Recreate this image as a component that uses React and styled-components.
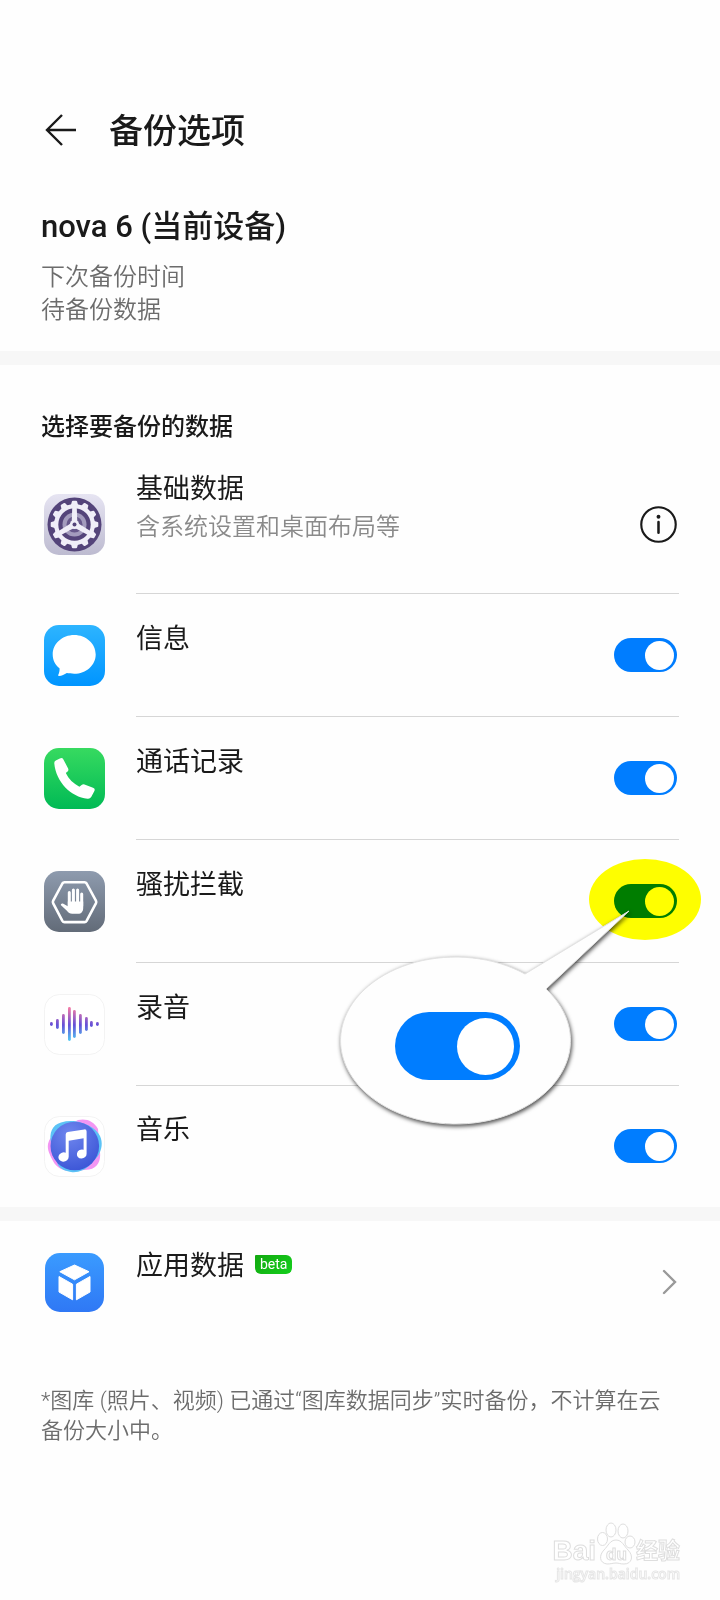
import React, { useState } from 'react';
import styled, { createGlobalStyle } from 'styled-components';

const GlobalStyle = createGlobalStyle`
    * {
        box-sizing: border-box;
    }

    body {
        margin: 0;
        background: #fefefe;
        color: #1a1a1a;
        font-family: Roboto, "Noto Sans CJK SC", sans-serif;
    }
`

const Page = styled.div`
    position: relative;
    display: flex;
    flex-direction: column;
    min-height: 100vh;
    overflow: hidden;
`

const Header = styled.header`
    display: flex;
    align-items: center;
    gap: 29px;
    padding: 108px 40px 0;
`

const IconButton = styled.button`
    display: flex;
    padding: 0;
    border: 0;
    background: none;
    color: inherit;
    cursor: pointer;
`

const PageTitle = styled.h1`
    margin: 0;
    font-size: 34px;
    font-weight: 500;
    line-height: 46px;
`

const Device = styled.section`
    padding: 53px 41px 24px;
    border-bottom: 14px solid #f7f7f7;
`

const DeviceName = styled.h2`
    margin: 0 0 14px;
    font-size: 31px;
    font-weight: 500;
    line-height: 40px;
`

const DeviceInfo = styled.p`
    margin: 0;
    color: #6c6c6c;
    font-size: 24px;
    font-weight: 350;
    line-height: 33px;
`

const DataSection = styled.section`
    padding-top: 46px;
    border-bottom: 14px solid #f7f7f7;
`

const SectionTitle = styled.h3`
    margin: 0 41px 12px;
    font-size: 24px;
    font-weight: 500;
    line-height: 32px;
`

const List = styled.ul`
    margin: 0;
    padding: 0;
    list-style: none;
`

const Row = styled.li`
    position: relative;
    display: flex;
    align-items: center;
    gap: 31px;
    height: ${props => props.$tall ? 139 : 123}px;
    padding: 0 41px 0 44px;

    &:last-child {
        height: 121px;
    }

    > svg {
        flex: none;
    }
`

const RowBody = styled.div`
    display: flex;
    flex: 1;
    align-items: center;
    justify-content: space-between;
    height: 100%;
    padding-right: 2px;
    border-bottom: 1px solid ${props => props.$last ? 'transparent' : '#d6d6d6'};
`

const RowText = styled.div`
    min-height: 68px;
    align-self: ${props => props.$top ? 'flex-start' : 'center'};
    padding-top: ${props => props.$top ? 16 : 0}px;
`

const RowName = styled.label`
    display: flex;
    align-items: center;
    gap: 11px;
    font-size: 27px;
    line-height: 36px;
`

const Summary = styled.p`
    margin: 4px 0 0;
    color: #8a8a8a;
    font-size: 24px;
    font-weight: 350;
    line-height: 32px;
`

const Badge = styled.span`
    height: 19px;
    margin-bottom: 4px;
    padding: 0 5px;
    border-radius: 1px 6px 6px 6px;
    background: linear-gradient(135deg, #12a810, #14cf1c);
    color: #fff;
    font-size: 14px;
    line-height: 19px;
`

const Toggle = styled.input.attrs({ type: 'checkbox' })`
    appearance: none;
    flex: none;
    display: flex;
    align-items: center;
    width: ${props => props.$large ? 125 : 63}px;
    height: ${props => props.$large ? 68 : 34}px;
    margin: 0;
    padding: 0 ${props => props.$large ? 6 : 3}px;
    border-radius: 34px;
    background: #c8c8c8;
    cursor: pointer;

    &::before {
        content: '';
        width: ${props => props.$large ? 57 : 29}px;
        height: ${props => props.$large ? 57 : 29}px;
        border-radius: 50%;
        background: #fff;
    }

    &:checked {
        justify-content: flex-end;
        background: #007dff;
    }
`

const Highlight = styled.div`
    position: absolute;
    z-index: 1;
    top: 19px;
    right: 19px;
    width: 112px;
    height: 81px;
    border-radius: 50%;
    background: #ff0;
    mix-blend-mode: multiply;
    pointer-events: none;
`

const Callout = styled.div`
    position: absolute;
    z-index: 2;
    top: 61px;
    right: 80px;
    width: 310px;
    height: 230px;
    pointer-events: none;
`

const CalloutShape = styled.svg`
    position: absolute;
    inset: 0;
    filter: drop-shadow(1px 2px 2px rgba(0, 0, 0, 0.7));
`

const CalloutBody = styled.div`
    position: absolute;
    bottom: 5px;
    left: 12px;
    display: flex;
    align-items: center;
    justify-content: center;
    width: 231px;
    height: 160px;
`

const Note = styled.p`
    margin: 42px 41px 0;
    color: #6c6c6c;
    font-size: 22px;
    font-weight: 350;
    line-height: 30px;
`

const Watermark = styled.div`
    position: absolute;
    right: 40px;
    bottom: 17px;
    color: #fff;
    font-family: "Liberation Sans", "Noto Sans CJK SC", sans-serif;
`

const WatermarkLogo = styled.div`
    display: flex;
    align-items: flex-end;
    height: 50px;
    font-size: 28px;
    font-weight: 700;
    line-height: 28px;
    -webkit-text-stroke: 1px #dedede;

    span + svg + span {
        font-size: 22px;
    }
`

const WatermarkUrl = styled.div`
    font-family: "Open Sans", sans-serif;
    font-size: 14px;
    font-weight: 600;
    line-height: 18px;
    text-align: right;
    -webkit-text-stroke: 1px #e6e6e6;
`

const Tile = ({ id, from, to, size = 61, stroke, children }) => (
    <svg width="61" height="61" viewBox="0 0 61 61" aria-hidden="true">
        <defs>
            <linearGradient id={id} x1="0" y1="0" x2="0" y2="1">
                <stop offset="0" stopColor={from} />
                <stop offset="1" stopColor={to} />
            </linearGradient>
        </defs>
        <rect
            x={(61 - size) / 2}
            y={(61 - size) / 2}
            width={size}
            height={size}
            rx="15"
            fill={`url(#${id})`}
            stroke={stroke}
        />
        {children}
    </svg>
)

const TEETH = Array.from({ length: 12 }, (_, i) => i * 30)

const SettingsIcon = () => (
    <Tile id="tile-settings" from="#e6e4f2" to="#bdbbd0">
        <circle cx="30.5" cy="30.5" r="27" fill="#54447a" />
        <g fill="#f0eef8">
            <circle cx="30.5" cy="30.5" r="20.5" />
            {TEETH.map(angle => (
                <path
                    key={angle}
                    d="M26.800 11.500L27.900 7.500Q28.100 6.700 28.900 6.700H32.100Q32.900 6.700 33.100 7.500L34.200 11.500Z"
                    transform={`rotate(${angle} 30.5 30.5)`}
                />
            ))}
        </g>
        <circle cx="30.500" cy="30.500" r="16.200" fill="#54447a" />
        <circle cx="30.5" cy="30.5" r="12" fill="#a39bbd" />
        <circle cx="30.5" cy="30.5" r="8" fill="#67588b" />
        <g fill="#f0eef8">
            {[0, 120, 240].map(angle => (
                <path
                    key={angle}
                    d="M28.300 12H32.700L33.400 30.500H27.600Z"
                    transform={`rotate(${angle} 30.5 30.5)`}
                />
            ))}
            <circle cx="30.5" cy="30.5" r="4.6" />
        </g>
        <circle cx="30.5" cy="30.5" r="2" fill="#54447a" />
    </Tile>
)

const MessageIcon = () => (
    <Tile id="tile-message" from="#2db4ff" to="#0095ff">
        <path
            fill="#fff"
            d="M30.2 10C42.1 10 51.7 18.6 51.7 29.4S42.1 48.7 30.2 48.7C27.5 48.7 25 48.2 22.8 48C20.500 49.600 17.700 50.700 15 51C14.200 51.100 14 50.500 14.300 49.800C15.300 47.600 15.800 45.600 15.500 43.300C11.200 39.800 8.700 35.100 8.700 29.4C8.7 18.6 18.3 10 30.2 10Z"
        />
    </Tile>
)

const PhoneIcon = () => (
    <Tile id="tile-phone" from="#37da60" to="#00ba55">
        <path
            fill="#fff"
            d="M10.3 15.5Q10 13.5 11.8 12.5L15.9 10.4Q18.2 9.3 19.4 11.4L24 20.3Q25 22.2 23.6 23.4L21.8 25.1C24.6 31 29.4 35.7 35.4 38.8L37.6 37Q39 36 40.5 36.5L49 39.7Q51.5 40.7 50.4 43L47.2 49Q46 51 43.5 50.7C27 49 12 34 10.3 15.5Z"
        />
    </Tile>
)

const BlockIcon = () => (
    <Tile id="tile-block" from="#8e9bae" to="#626b78">
        <path
            fill="none"
            stroke="#fff"
            strokeWidth="2.6"
            strokeLinejoin="round"
            d="M20.5 11.3H40.5Q41.9 11.3 42.6 12.5L51.9 29.6Q52.6 31 51.9 32.4L42.6 49.9Q41.9 51.1 40.5 51.1H20.5Q19.1 51.1 18.4 49.9L9.2 32.4Q8.5 31 9.2 29.6L18.4 12.5Q19.1 11.3 20.5 11.3Z"
        />
        <g stroke="#fff" strokeWidth="3" strokeLinecap="round">
            <path d="M25.3 21.5V35M29.4 19V35M33.6 19V35M37.7 23V35" />
        </g>
        <path
            fill="#fff"
            d="M23.8 30.5H39.2V37C39.2 40.5 37.3 42.8 34 42.8H28.2C25.8 42.8 24.3 41.6 22.9 39.8L17 34.3C16.4 33.2 17.6 32.1 18.9 32.5L23.8 35.2Z"
        />
    </Tile>
)

const WAVE = [
    [7, 2], [13, 5], [19, 10], [25, 17], [30, 14], [36, 10], [42, 7], [47, 3], [53, 2],
]

const RecorderIcon = () => (
    <Tile id="tile-recorder" from="#fff" to="#fff" size={60} stroke="#f3f3f3">
        <defs>
            <linearGradient id="wave" gradientUnits="userSpaceOnUse" x1="0" y1="14" x2="0" y2="48">
                <stop offset="0" stopColor="#f27aa6" />
                <stop offset="0.5" stopColor="#6450d8" />
                <stop offset="1" stopColor="#4fd3f5" />
            </linearGradient>
        </defs>
        {WAVE.map(([x, half]) => (
            <rect
                key={x}
                x={x - 1}
                y={30 - half}
                width="2.8"
                height={half * 2}
                rx="1.4"
                fill="url(#wave)"
            />
        ))}
    </Tile>
)

const MusicIcon = () => (
    <Tile id="tile-music" from="#fff" to="#fff" size={60} stroke="#f3f3f3">
        <defs>
            <radialGradient id="disc" cx="0.4" cy="0.25" r="0.8">
                <stop offset="0" stopColor="#6f86ee" />
                <stop offset="1" stopColor="#3b55d6" />
            </radialGradient>
        </defs>
        <path
            fill="#f396f3"
            d="M34 4C42 2 50 5 54 13L56 36C57 44 54 52 45 53.500L30 55C22 56 13 53 9 45C6 39 3 34 4 28C5 23 8 20 11 17Z"
        />
        <path
            fill="#5cc3f6"
            d="M7 27C5 17 8 9 17 6.500C24 4.500 31 4.500 38 7C46 9 53 14 56 20C59 27 58 33 54 40L46 49C41 54 34 57 27 56C21 55 17 53 14 49Z"
        />
        <circle cx="30.800" cy="30" r="24.300" fill="url(#disc)" />
        <path
            fill="#fff"
            d="M21.700 18.500Q21.700 16.400 23.800 16L40.200 13.400Q42.600 13.100 42.600 15.500V37.500A4.900 4.500 -15 1 1 39.600 33.800V22.200L24.700 24.800V40.500A5.200 4.600 -15 1 1 21.700 36.700Z"
        />
    </Tile>
)

const AppDataIcon = () => (
    <Tile id="tile-appdata" from="#3a9bff" to="#2f78f5" size={59}>
        <path
            fill="#fff"
            stroke="#fff"
            strokeWidth="1"
            strokeLinejoin="round"
            d="M30.500 13L45 19.700L30.500 27.800L15.800 19.700ZM15 24.500L28.600 32.200V47.800L15 40ZM32.400 32.200L46 24.500V40L32.400 47.800Z"
        />
    </Tile>
)

const BackArrow = () => (
    <svg width="40" height="40" viewBox="0 0 40 40" fill="none" stroke="currentColor" strokeWidth="2.4">
        <path d="M36 19H7M22 4L7 19L22 34" />
    </svg>
)

const InfoIcon = () => (
    <svg width="37" height="37" viewBox="0 0 38 38" fill="none">
        <circle cx="19" cy="19" r="17.700" stroke="currentColor" strokeWidth="2.200" />
        <path d="M19 16.500V27.500" stroke="currentColor" strokeWidth="2.600" strokeLinecap="round" />
        <circle cx="19" cy="11" r="2" fill="currentColor" />
    </svg>
)

const Chevron = () => (
    <svg width="16" height="26" viewBox="0 0 16 26" fill="none" stroke="#999" strokeWidth="2.400" strokeLinecap="round">
        <path d="M3 2L14 13L3 24" />
    </svg>
)

const Paw = () => (
    <svg width="40" height="46" viewBox="0 0 40 46" fill="#fff" stroke="#dedede">
        <ellipse cx="6.500" cy="20" rx="5" ry="6.500" />
        <ellipse cx="15" cy="11" rx="5" ry="7" />
        <ellipse cx="27" cy="12" rx="5" ry="7" />
        <ellipse cx="34" cy="23" rx="5" ry="6" />
        <path d="M20 21C26 21 28 27 32 31C38 37 36 45 28 45C24 45 23 44 20 44S15 45 11 45C3 44 3 36 8 31C12 27 14 21 20 21Z" />
        <text x="10" y="41" fontSize="17" fontWeight="700">du</text>
    </svg>
)

const ITEMS = [
    { id: 'message', name: '信息', Icon: MessageIcon },
    { id: 'calls', name: '通话记录', Icon: PhoneIcon },
    { id: 'block', name: '骚扰拦截', Icon: BlockIcon, marked: true },
    { id: 'recorder', name: '录音', Icon: RecorderIcon },
    { id: 'music', name: '音乐', Icon: MusicIcon },
]

const App = () => {
    const [enabled, setEnabled] = useState({
        message: true,
        calls: true,
        block: true,
        recorder: true,
        music: true,
    })

    const toggle = id => setEnabled({ ...enabled, [id]: !enabled[id] })

    return (
        <Page>
            <GlobalStyle />
            <Header>
                <IconButton type="button" aria-label="返回">
                    <BackArrow />
                </IconButton>
                <PageTitle>备份选项</PageTitle>
            </Header>

            <Device>
                <DeviceName>nova 6 (当前设备)</DeviceName>
                <DeviceInfo>下次备份时间</DeviceInfo>
                <DeviceInfo>待备份数据</DeviceInfo>
            </Device>

            <DataSection>
                <SectionTitle>选择要备份的数据</SectionTitle>
                <List>
                    <Row $tall>
                        <SettingsIcon />
                        <RowBody>
                            <RowText $top>
                                <RowName as="div">基础数据</RowName>
                                <Summary>含系统设置和桌面布局等</Summary>
                            </RowText>
                            <IconButton type="button" aria-label="详情">
                                <InfoIcon />
                            </IconButton>
                        </RowBody>
                    </Row>
                    {ITEMS.map(({ id, name, Icon, marked }, index) => (
                        <Row key={id}>
                            <Icon />
                            <RowBody $last={index === ITEMS.length - 1}>
                                <RowText>
                                    <RowName htmlFor={id}>{name}</RowName>
                                </RowText>
                                <Toggle id={id} checked={enabled[id]} onChange={() => toggle(id)} />
                            </RowBody>
                            {marked && <Highlight />}
                            {marked && (
                                <Callout>
                                    <CalloutShape width="310" height="230" viewBox="0 0 310 230">
                                        <path
                                            fill="#fefefe"
                                            stroke="#e2e2e2"
                                            d="M195 73L299 10L216 88A115 83.500 0 1 1 195 73Z"
                                        />
                                    </CalloutShape>
                                    <CalloutBody>
                                        <Toggle
                                            $large
                                            aria-label={name}
                                            tabIndex={-1}
                                            checked={enabled[id]}
                                            readOnly
                                        />
                                    </CalloutBody>
                                </Callout>
                            )}
                        </Row>
                    ))}
                </List>
            </DataSection>

            <Row as="section">
                <AppDataIcon />
                <RowBody $last>
                    <RowText>
                        <RowName as="div">
                            应用数据
                            <Badge>beta</Badge>
                        </RowName>
                    </RowText>
                    <IconButton type="button" aria-label="应用数据">
                        <Chevron />
                    </IconButton>
                </RowBody>
            </Row>

            <Note>*图库 (照片、视频) 已通过“图库数据同步”实时备份，不计算在云备份大小中。</Note>

            <Watermark>
                <WatermarkLogo>
                    <span>Bai</span>
                    <Paw />
                    <span>经验</span>
                </WatermarkLogo>
                <WatermarkUrl>jingyan.baidu.com</WatermarkUrl>
            </Watermark>
        </Page>
    )
}

export default App;
